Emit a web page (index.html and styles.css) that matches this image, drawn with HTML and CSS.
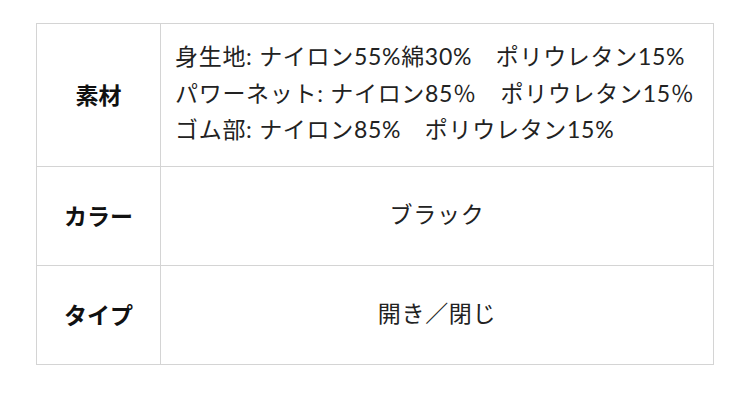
FILE: index.html
```html
<!DOCTYPE html>
<html lang="ja">
<head>
<meta charset="utf-8">
<link rel="stylesheet" href="styles.css">
</head>
<body>
<div class="wrap">
<table class="spec">
  <tr>
    <th>素材</th>
    <td class="left">身生地: ナイロン55%綿30%　ポリウレタン15%<br>パワーネット: ナイロン85％　ポリウレタン15％<br>ゴム部: ナイロン85%　ポリウレタン15%</td>
  </tr>
  <tr>
    <th>カラー</th>
    <td>ブラック</td>
  </tr>
  <tr>
    <th>タイプ</th>
    <td>開き／閉じ</td>
  </tr>
</table>
</div>
</body>
</html>
```
FILE: styles.css
```css
html, body {
  margin: 0;
  padding: 0;
  background: #fff;
}
.wrap {
  padding: 23px 36px 0 36px;
}
.spec {
  width: 678px;
  border-collapse: collapse;
  font-family: Lato, "Noto Sans CJK JP", sans-serif;
  color: #222;
}
.spec th, .spec td {
  border: 1px solid #d4d4d4;
}
.spec th {
  width: 123px;
  font-size: 23px;
  font-weight: bold;
  color: #111;
  text-align: center;
  padding: 29px 0;
  line-height: 40px;
}
.spec td {
  font-size: 23px;
  letter-spacing: 0.7px;
  line-height: 36.5px;
  padding: 14px 14px 18.5px 14px;
  text-align: center;
}
.spec td.left {
  text-align: left;
}
```
